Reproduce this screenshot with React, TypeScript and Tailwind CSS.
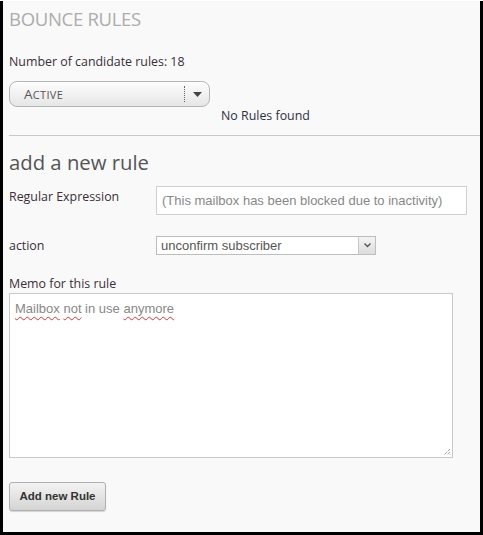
import React from "react";

const seg = { fontFamily: '"Open Sans", "Noto Sans", sans-serif' };
const arial = { fontFamily: '"Liberation Sans", Arial, sans-serif' };

const squiggle =
  "underline decoration-wavy decoration-[#e03030] decoration-[1px] underline-offset-[3px]";

export default function App() {
  return (
    <div className="w-[483px] h-[535px] bg-black">
      <div
        className="ml-[3px] mt-[1px] w-[477px] h-[531px] bg-[#f9f9f9] pl-[6px] text-[#333]"
        style={seg}
      >
        <div className="pt-[5px] text-[18.5px] leading-[26px] text-[#acacac] tracking-[-0.3px]">
          BOUNCE RULES
        </div>
        <div className="mt-[22px] text-[12.4px] leading-[16px] text-[#3a2f3a]">
          Number of candidate rules: 18
        </div>
        <div className="mt-[11px] w-[201px] h-[26px] rounded-[8px] border border-[#b5b5b5] bg-gradient-to-b from-[#fdfdfd] to-[#e6e6e6] flex items-center shadow-[inset_0_1px_0_#fff]">
          <div className="flex-1 pl-[14px] text-[13.5px] text-[#555] tracking-[0.3px]">
            A<span className="text-[11px]">CTIVE</span>
          </div>
          <div className="h-[16px] border-l border-dotted border-[#666]" />
          <div className="w-[24px] flex items-center justify-center">
            <svg width="9" height="5" viewBox="0 0 9 5">
              <path d="M0 0h9L4.5 5z" fill="#444" />
            </svg>
          </div>
        </div>
        <div className="ml-[212px] mt-[1px] text-[12.4px] leading-[16px] text-[#2f2f45]">
          No Rules found
        </div>
        <div className="mt-[11px] h-[1px] bg-[#c8c8c8]" />
        <div className="mt-[13px] text-[20.3px] leading-[26px] text-[#555]">
          add a new rule
        </div>
        <div className="mt-[11px] flex items-start">
          <div className="w-[147px] pt-[3px] text-[12.4px] leading-[16px] text-[#3a2f3a]">
            Regular Expression
          </div>
          <div
            className="w-[311px] h-[29px] bg-white border border-[#d0d0d0] flex items-center pl-[5px] text-[13px] text-[#888]"
            style={arial}
          >
            (This mailbox has been blocked due to inactivity)
          </div>
        </div>
        <div className="mt-[21px] flex items-center">
          <div className="w-[147px] text-[12.4px] leading-[16px] text-[#3a2f3a]">action</div>
          <div
            className="w-[220px] h-[19px] bg-white border border-[#bdbdbd] flex items-center"
            style={arial}
          >
            <div className="flex-1 pl-[4px] text-[13px] leading-[17px] text-[#555]">
              unconfirm subscriber
            </div>
            <div className="w-[17px] h-[17px] border-l border-[#c8c8c8] bg-gradient-to-b from-[#f4f4f4] to-[#dcdcdc] flex items-center justify-center">
              <svg width="7" height="5" viewBox="0 0 7 5">
                <path d="M0.5 0.5L3.5 3.5L6.5 0.5" stroke="#555" strokeWidth="1.4" fill="none" />
              </svg>
            </div>
          </div>
        </div>
        <div className="mt-[21px] text-[12.4px] leading-[16px] text-[#3a2f3a]">
          Memo for this rule
        </div>
        <div
          className="relative mt-[1px] w-[444px] h-[165px] bg-white border border-[#c8c8c8] px-[5px] pt-[6px] text-[13px] leading-[17px] text-[#888]"
          style={arial}
        >
          <span className={squiggle}>Mailbox</span>{" "}
          <span className={squiggle}>not</span> in use{" "}
          <span className={squiggle}>anymore</span>
          <svg
            className="absolute right-[1px] bottom-[1px]"
            width="8"
            height="8"
            viewBox="0 0 8 8"
          >
            <path d="M7 1L1 7M7 4L4 7M7 6.5L6.5 7" stroke="#777" strokeWidth="1" strokeDasharray="1 1" />
          </svg>
        </div>
        <button
          className="mt-[24px] w-[97px] h-[29px] rounded-[3px] border border-[#b0b0b0] bg-gradient-to-b from-[#f3f3f3] to-[#d4d4d4] text-[11.5px] font-bold text-[#333] shadow-[0_1px_1px_rgba(0,0,0,0.15)]"
          style={arial}
        >
          Add new Rule
        </button>
      </div>
    </div>
  );
}
